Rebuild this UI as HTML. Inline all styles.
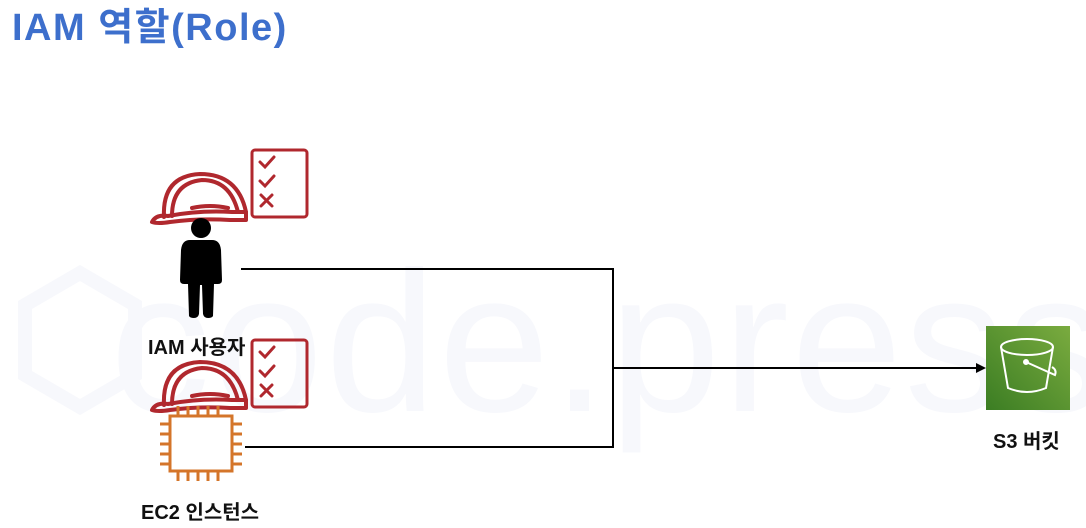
<!DOCTYPE html>
<html><head><meta charset="utf-8"><style>
html,body{margin:0;padding:0;background:#fff;width:1086px;height:528px;overflow:hidden;position:relative;font-family:"Liberation Sans","Noto Sans CJK KR",sans-serif}
.t{position:absolute;font-weight:bold}
</style></head><body>
<div style="position:absolute;left:110px;top:228px;font-size:200px;color:#f7f8fc;letter-spacing:2px;font-family:'Liberation Sans',sans-serif;white-space:nowrap">code.press</div>
<svg style="position:absolute;left:15px;top:265px" width="130" height="150"><path d="M65 8 L120 40 L120 110 L65 142 L10 110 L10 40 Z" fill="none" stroke="#f7f8fc" stroke-width="14"/></svg>
<div class="t" style="left:12px;top:-4px;font-size:38px;letter-spacing:1.5px;color:#3d6fcc">IAM 역할(Role)</div>
<svg style="position:absolute;left:0;top:0" width="1086" height="528">
<defs>
<g id="helm" fill="none" stroke="#b0282e" stroke-width="4" stroke-linejoin="round" stroke-linecap="round">
<path d="M14 47 Q12 6 50 4 Q88 4 96 42"/>
<path d="M22 46 Q22 13 52 10 Q80 10 88 42"/>
<path d="M2 52 Q6 44 18 46 Q50 40 82 42 L96 42 L96 50 L80 50 Q50 48 20 52 Q8 54 2 52 Z"/>
<path d="M42 38 Q60 34 78 38"/>
</g>
<g id="chk" fill="none" stroke="#b0282e" stroke-width="3" stroke-linecap="round">
<rect x="0" y="0" width="55" height="67" rx="3"/>
<path d="M8 12 L13 17 L22 7 M8 31 L13 36 L22 26 M9 45 L20 56 M20 45 L9 56"/>
</g>
<linearGradient id="gr" x1="0" y1="1" x2="1" y2="0"><stop offset="0" stop-color="#3b7d23"/><stop offset="1" stop-color="#7aab3f"/></linearGradient>
</defs>
<use href="#helm" x="150" y="170"/>
<use href="#chk" x="252" y="150"/>
<use href="#helm" x="150" y="358"/>
<use href="#chk" x="252" y="340"/>
<circle cx="201" cy="228" r="10" fill="#000"/>
<path d="M190 240 L212 240 Q220 240 221 250 L222 280 Q222 284 218 284 L214 284 L213 316 Q212 318 208 318 Q204 318 203 314 L202 285 L200 285 L199 314 Q198 318 194 318 Q190 318 189 316 L188 284 L184 284 Q180 284 180 280 L181 250 Q182 240 190 240 Z" fill="#000"/>
<g fill="none" stroke="#d4752a" stroke-width="3">
<rect x="170" y="416" width="62" height="55"/>
<path d="M178 406v10M188 406v10M198 406v10M208 406v10M218 406v10M178 471v10M188 471v10M198 471v10M208 471v10M218 471v10M160 424h10M160 434h10M160 444h10M160 454h10M160 464h10M232 424h10M232 434h10M232 444h10M232 454h10M232 464h10"/>
</g>
<path d="M241 269 H613 V447 H245 M613 368 H978" fill="none" stroke="#000" stroke-width="2"/>
<path d="M986 368 L976 363 L976 373 Z" fill="#000"/>
<rect x="986" y="326" width="84" height="84" fill="url(#gr)"/>
<g fill="none" stroke="#fff" stroke-width="2">
<ellipse cx="1027" cy="347" rx="26" ry="8"/>
<path d="M1001 347 L1008 388 Q1027 396 1046 388 L1053 347"/>
<path d="M1026 362 L1055 375 Q1057 370 1052 367"/>
<circle cx="1026" cy="362" r="2" fill="#fff"/>
</g>
</svg>
<div class="t" style="left:148px;top:331px;font-size:20px;color:#111">IAM 사용자</div>
<div class="t" style="left:141px;top:496px;font-size:20px;color:#111">EC2 인스턴스</div>
<div class="t" style="left:993px;top:425px;font-size:20px;color:#111">S3 버킷</div>
</body></html>
